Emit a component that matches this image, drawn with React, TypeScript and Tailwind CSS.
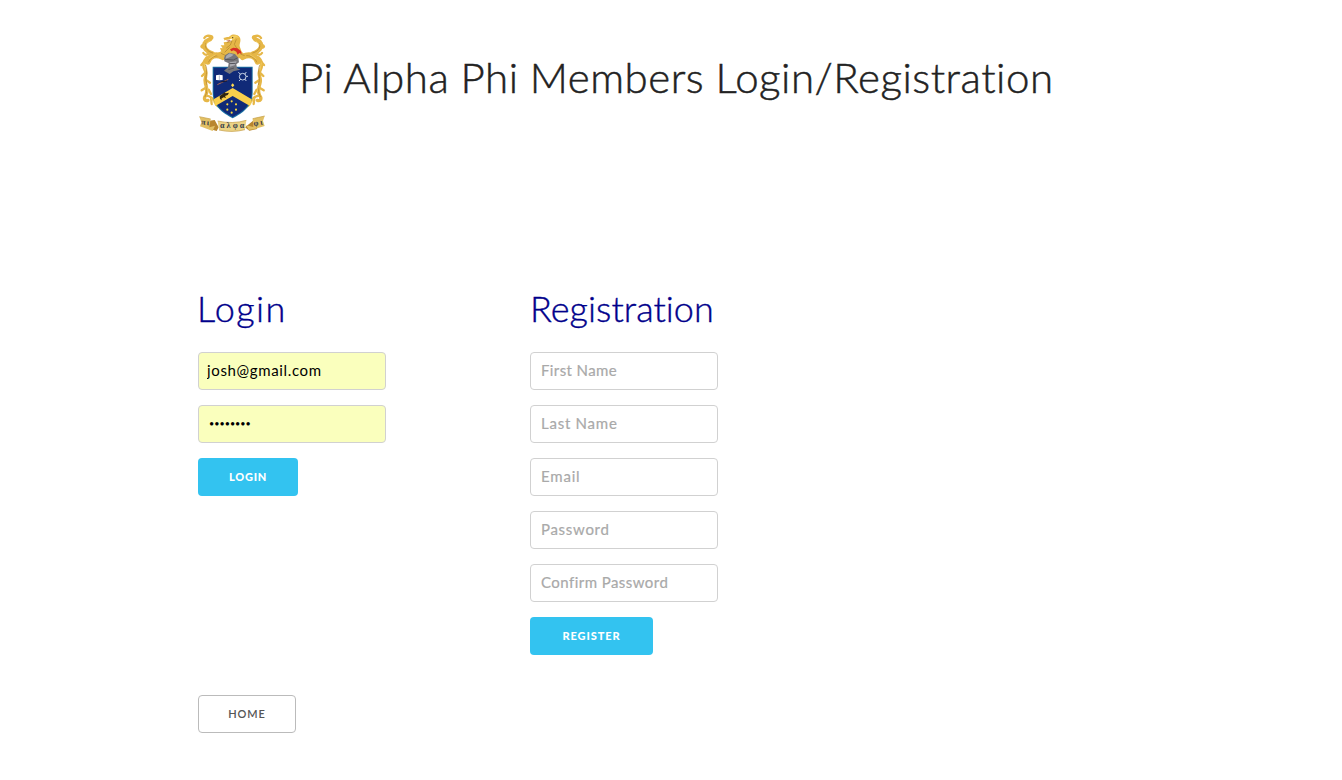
import React from 'react';

const scrollWork = (
  <g fill="none" stroke="#e6b747" strokeLinecap="round" strokeLinejoin="round">
    <path strokeWidth="13" d="M68 86C50 80 39 68 44 55C48 43 59 49 64 38" />
    <path strokeWidth="7" d="M66 35C55 30 46 32 43 39M38 68C31 66 35 60 40 62M40 84C45 92 55 90 60 83" />
    <path strokeWidth="18" d="M98 96C77 84 58 93 53 110" />
    <path strokeWidth="10" d="M51 98C38 112 39 125 47 139C53 151 41 159 46 174C50 190 54 199 47 211C40 221 44 229 54 226" />
    <path strokeWidth="7" d="M41 112L34 120M44 145L36 153M49 166L60 173M45 190L35 196M56 194L63 207M48 212C60 213 70 220 76 234C82 247 93 247 91 236M63 218L65 237" />
    <path stroke="#b0822c" strokeWidth="2" d="M47 56C43 71 55 80 68 84M47 121C55 136 46 151 48 166C54 188 51 203 45 215M86 92C71 92 61 99 56 111" />
    <path stroke="#f6d36a" strokeWidth="2" d="M58 48L47 60M75 90L58 101M42 114L46 135M51 181L54 201M64 220L75 238" />
  </g>
);

function Crest() {
  return (
    <svg className="block h-[100px] w-[68px] shrink-0" viewBox="24 24 204 300" role="img" aria-label="Pi Alpha Phi">
      {scrollWork}
      <g transform="translate(256 0) scale(-1 1)">{scrollWork}</g>
      <path fill="#e6b747" d="M104 42C110 36 116 37 121 32C128 26 145 28 150 38C154 48 148 55 149 64L155 80L167 91L150 100L98 101L79 91L84 83L94 79L90 69L98 70L92 61L103 61L101 52L111 50L102 46Z" />
      <path fill="#f4cf60" d="M121 34L139 31L147 39L137 37L132 44L118 45Z" />
      <path fill="#fff" d="M103 45L127 41L123 51L105 50Z" />
      <path fill="#e6b747" d="M100 39L112 36L122 36L120 43L104 44Z" />
      <path fill="#bd5830" d="M108 47L123 45L117 50Z" />
      <circle cx="128" cy="38" r="2" fill="#493718" />
      <path fill="none" stroke="#b0822c" strokeWidth="2" d="M110 53L126 48L121 60L109 69M139 43L133 58L143 74M119 67L104 82M93 85L108 92M151 87L164 92" />
      <path fill="#176da1" d="M68 125H188V202C188 245 158 264 128 280C98 264 68 245 68 202Z" />
      <path fill="#102a78" d="M71 128H185V201C185 242 156 261 128 276C100 261 71 242 71 201Z" />
      <path fill="#f9cf4c" d="M128 189L185 223L180 243L128 213L76 243L71 223Z" />
      <path fill="#77777b" d="M105 91L117 83L135 87L145 98L147 112L139 118L141 129L151 134L130 139L119 147L102 137L114 127L116 115L103 109L102 100Z" />
      <path fill="#aaaab0" d="M109 92L119 85L131 89L123 95L106 102ZM119 112L140 109L134 121L120 125Z" />
      <path fill="none" stroke="#55545b" strokeWidth="3" d="M105 103L130 105L142 99M118 116L137 115M115 134L132 129" />
      <path fill="#d92f25" d="M120 73L130 68L142 70L153 78L155 87L148 84L143 89L139 80L131 76L124 79Z" />
      <path fill="#fff" d="M78 151L88 149L98 151V165L88 166L78 165Z" />
      <path stroke="#65749b" strokeWidth="1.5" d="M88 151V165" />
      <path stroke="#b16c54" strokeWidth="3" d="M82 179L115 163" />
      <path stroke="#121633" strokeWidth="3" d="M92 171L111 168" />
      <g fill="none" stroke="#c5d0e5" strokeWidth="3">
        <circle cx="158" cy="155" r="10" />
        <path d="M145 142L152 148M147 168L153 162M169 141L164 148M169 168L164 162M174 154H168" />
      </g>
      <path fill="#2d2411" d="M89 213L97 208L103 202L107 205L117 203L113 210L105 213L108 219L101 217L94 221L96 226L90 222Z" />
      <path fill="#ffda4f" d="M123 181L128 175L133 181L128 187Z" />
      {[[125, 229], [138, 238], [138, 254], [125, 263], [112, 254], [112, 238]].map(([x, y]) => (
        <circle key={`${x}-${y}`} cx={x} cy={y} r="3.2" fill="#f9d840" />
      ))}
      <path fill="#b9862e" d="M53 288L74 285L86 307L80 318L57 311ZM192 285L207 279L201 312L178 317L165 307Z" />
      <path fill="#e2c064" d="M28 275L62 282L58 307L75 302L68 318L30 304L34 292ZM188 281L224 273L219 288L224 303L190 313L176 315L169 301L190 306Z" />
      <path fill="#ecd386" d="M83 288Q128 298 169 286L165 314Q126 324 87 315Z" />
      <path fill="none" stroke="#c39a41" strokeWidth="2" d="M83 288Q128 298 169 286M87 315Q126 324 165 314M28 275L62 282M188 281L224 273" />
      <g fill="#353c4b" fontFamily="Liberation Serif, serif" fontWeight="bold" fontSize="24">
        <text x="33" y="298" textLength="24" transform="rotate(7 33 298)">πι</text>
        <text x="90" y="310" textLength="73">αλφα</text>
        <text x="191" y="303" textLength="28" transform="rotate(-8 191 303)">φι</text>
      </g>
    </svg>
  );
}

const inputClass = 'block h-[38px] w-[188px] rounded-[4px] border border-[#d1d1d1] pb-[2px] outline-none placeholder:text-[#a9a9a9] placeholder:opacity-100';
const fieldClass = `${inputClass} bg-white px-[10px] text-[15px] text-black [-webkit-text-stroke:0.2px_#a9a9a9]`;
const primaryClass = 'block h-[38px] rounded-[4px] bg-[#33c3f0] text-center text-[11px] font-black leading-[38px] text-white';

export default function App() {
  return (
    <main className="h-[780px] overflow-hidden bg-white pl-[198px] pt-[33px] font-[Lato,sans-serif] text-[#222]">
      <header className="flex h-[252px]">
        <Crest />
        <h1 className="ml-[33px] mt-[19px] whitespace-nowrap text-[42px] font-light leading-[50px] tracking-[0.53px] [word-spacing:-0.7px] [-webkit-text-stroke:0.5px_#222]">Pi Alpha Phi Members Login/Registration</h1>
      </header>
      <div className="flex h-[410px]">
        <form className="w-[332px]" onSubmit={(e) => e.preventDefault()}>
          <h2 className="-ml-px h-[67px] whitespace-nowrap text-[36px] font-light leading-[47px] tracking-[1.4px] text-[#00008b] [-webkit-text-stroke:0.4px_#00008b]">Login</h2>
          <div className="flex flex-col items-start gap-[15px]">
            <input aria-label="Email" defaultValue="josh@gmail.com" className={`${inputClass} bg-[#faffbd] px-[8px] text-[15px] text-black tracking-[0.65px]`} />
            <input aria-label="Password" type="password" defaultValue="password" className={`${inputClass} bg-[#faffbd] px-[10px] text-[9px] text-black`} />
            <button className={`${primaryClass} w-[100px] tracking-[0.8px]`}>LOGIN</button>
          </div>
        </form>
        <form onSubmit={(e) => e.preventDefault()}>
          <h2 className="h-[67px] whitespace-nowrap text-[36px] font-light leading-[47px] tracking-[0.04px] text-[#00008b] [-webkit-text-stroke:0.4px_#00008b]">Registration</h2>
          <div className="flex flex-col items-start gap-[15px]">
            <input placeholder="First Name" className={`${fieldClass} tracking-[0.4px]`} />
            <input placeholder="Last Name" className={`${fieldClass} tracking-[0.75px]`} />
            <input placeholder="Email" className={`${fieldClass} tracking-[0.8px]`} />
            <input placeholder="Password" type="password" className={`${fieldClass} tracking-[0.7px]`} />
            <input placeholder="Confirm Password" type="password" className={`${fieldClass} tracking-[0.45px]`} />
            <button className={`${primaryClass} w-[123px] tracking-[0.9px]`}>REGISTER</button>
          </div>
        </form>
      </div>
      <button className="block h-[38px] w-[98px] rounded-[4px] border border-[#bbb] bg-white text-center text-[11px] font-semibold leading-[36px] tracking-[0.85px] text-[#555]">HOME</button>
    </main>
  );
}
